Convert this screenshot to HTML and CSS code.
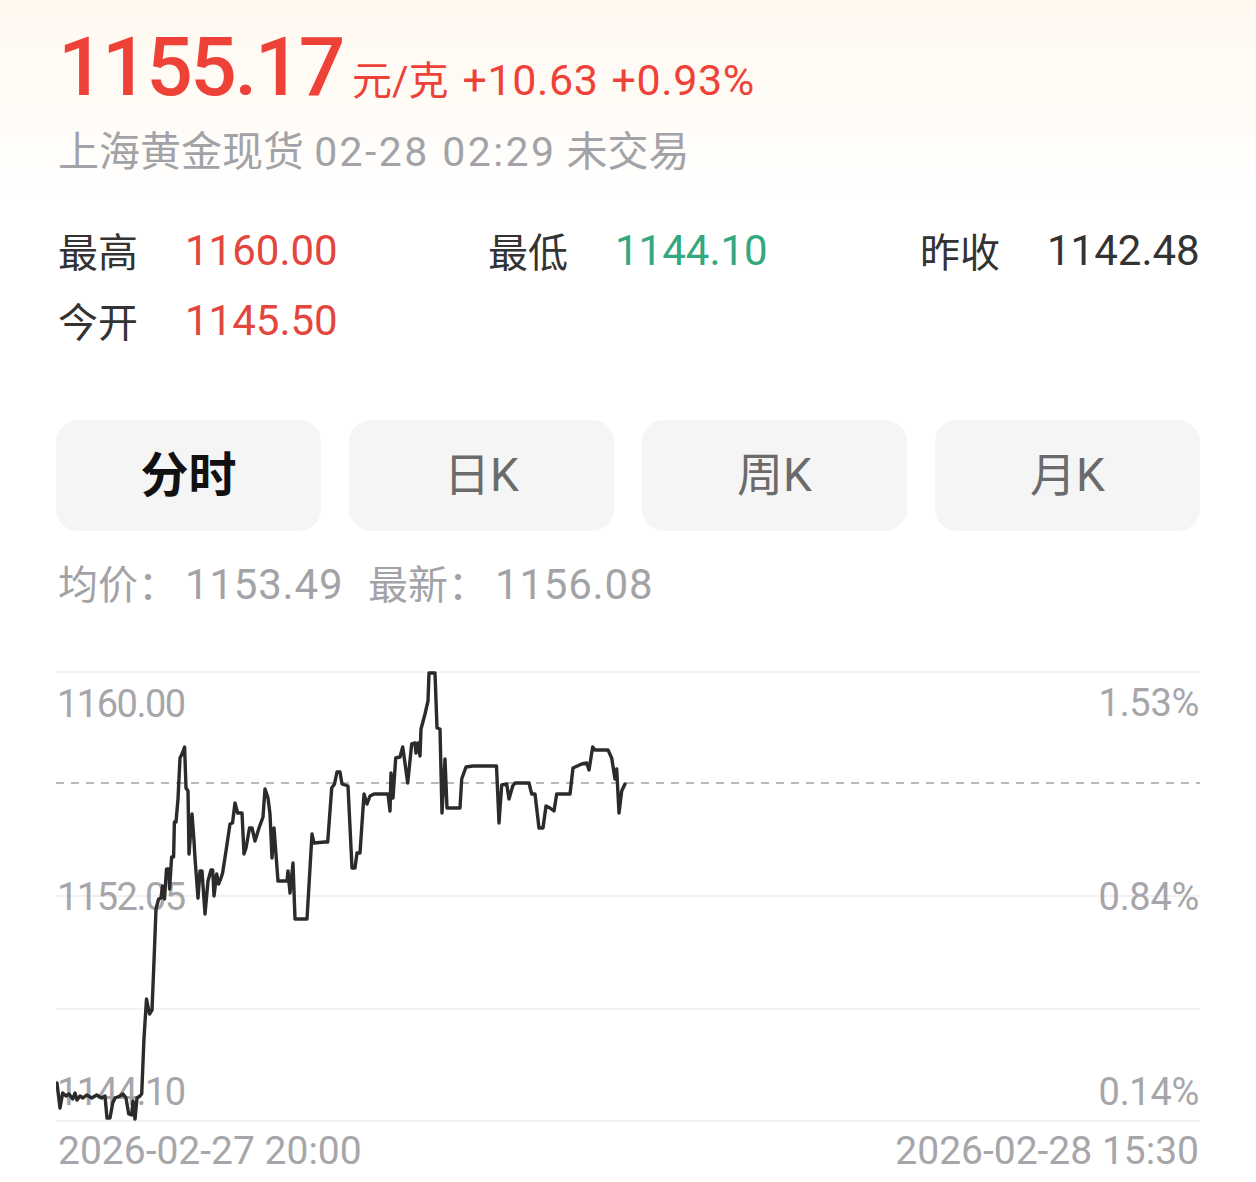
FILE: index.html
```html
<!DOCTYPE html>
<html lang="zh-CN">
<head>
<meta charset="utf-8">
<title>上海黄金现货</title>
<link rel="stylesheet" href="styles.css">
</head>
<body>
<div class="page">
  <header class="head">
    <div class="price-row">
      <span class="price">1155.17</span>
      <span class="unit">元/克</span>
      <span class="chg">+10.63</span>
      <span class="chg">+0.93%</span>
    </div>
    <div class="sub">上海黄金现货 <span class="sub-num">02-28 02:29</span> 未交易</div>
  </header>

  <section class="stats">
    <div class="stat"><span class="lbl">最高</span><span class="val up">1160.00</span></div>
    <div class="stat"><span class="lbl">最低</span><span class="val down">1144.10</span></div>
    <div class="stat"><span class="lbl">昨收</span><span class="val">1142.48</span></div>
    <div class="stat"><span class="lbl">今开</span><span class="val up">1145.50</span></div>
  </section>

  <nav class="tabs">
    <div class="tab active">分时</div>
    <div class="tab">日K</div>
    <div class="tab">周K</div>
    <div class="tab">月K</div>
  </nav>

  <div class="avg">
    <span class="avg-lbl">均价：</span><span class="avg-val">1153.49</span>
    <span class="avg-lbl">最新：</span><span class="avg-val">1156.08</span>
  </div>

  <div class="chart">
    <svg class="chart-svg" viewBox="56 660 1144 465" width="1144" height="465" xmlns="http://www.w3.org/2000/svg">
      <g class="grid">
        <line x1="56" y1="671" x2="1200" y2="671"/>
        <line x1="56" y1="895" x2="1200" y2="895"/>
        <line x1="56" y1="1008" x2="1200" y2="1008"/>
        <line x1="56" y1="1120" x2="1200" y2="1120"/>
      </g>
      <line class="base" x1="56" y1="782" x2="1200" y2="782"/>
      <g class="axis">
        <text x="57" y="716">1160.00</text>
        <text x="57" y="909">1152.05</text>
        <text x="57" y="1104">1144.10</text>
        <text class="r" x="1199" y="715">1.53%</text>
        <text class="r" x="1199" y="909">0.84%</text>
        <text class="r" x="1199" y="1104">0.14%</text>
      </g>
      <polyline class="trend" points="57,1082 60,1107 62.7,1092 66,1095 69,1093 72.7,1098 75,1092 77,1099 80,1095 83,1097 86.7,1094 91.7,1097 96.7,1094 101.7,1097 105,1095 107,1117 110,1117 112.7,1102 115,1097 120,1095 123,1093 126,1097 128.7,1113 131.7,1114 133,1100 135,1118 137,1097 140,1095 141.7,1093 144,1037 146.5,998 149.5,1013 152,1009 154,960 156,908 158.6,898 161,897 162.5,885 164.5,898 166.5,868 169,868 169.6,888 171.6,856 173.6,856 174.4,821 176,821 178,798 180,757 182,753 184.6,746 186,787 188,790 189,853 192,813 194,840 195,857 198,897 200,870 202,870 205,913 208,880 211,869 212.7,869 214,895 216.7,873 218.7,883 221,877 222.6,872 226,850 230,823 232.5,822 235,802 237.6,812 242,812 244,853 246,847 249.5,827 252,827 255,840 259,827 263,816 265,788 268,797 270,813 272,857 274,827 278,880 287,880 288,870 290,892 293,862 295,918 307,918 312,833 314,842 324.6,841 327.7,841 331.7,787 334.5,783 337,771 340,771 342,783 348,785 352,867 355,867 357,852 360,852 364,793 367,803 370,795 374,793 388,793 390,810 391,772 393,797 395.7,757 400,756 402.7,746 404,755 407.7,782 411.7,743 415,742 416,752 418,742 420,755 421,728 425,713 428,700 429,672 435,672 437,727 440,728 442,812 445,758 447,807 449,807 460,807 461.7,778 466,766 473,765 496.5,765 499,822 501.7,784 506.7,783 509,798 512.7,785 515,782 529,782 531.7,793 535,793 539,827 543,827 546,805 550,807 554,810 556.7,793 570,793 573,767 581.7,763 586.7,762 589,769 592.7,746 595,749 608,749 611.7,757 615,778 616.7,768 619,812 621.7,790 625,783"/>
    </svg>
    <div class="dates">
      <span>2026-02-27 20:00</span>
      <span>2026-02-28 15:30</span>
    </div>
  </div>
</div>
</body>
</html>
```

FILE: styles.css
```css
html, body {
  margin: 0;
  padding: 0;
  background: #ffffff;
}

body {
  font-family: Roboto, "Noto Sans CJK SC", sans-serif;
  color: #333333;
}

.page {
  width: 1256px;
  box-sizing: border-box;
}

.head {
  padding: 26px 56px 0 58px;
  height: 200px;
  box-sizing: border-box;
  background: linear-gradient(180deg, #fff9f0 0%, #fffbf5 45%, #fffefc 85%, #ffffff 100%);
}

.price-row {
  display: flex;
  align-items: baseline;
  line-height: 1;
  color: #ee4238;
}

.price {
  font-size: 82px;
  font-weight: 500;
  letter-spacing: -2.5px;
  margin-right: 9px;
}

.unit {
  font-size: 40px;
  margin-right: 14px;
}

.chg {
  font-size: 43px;
  letter-spacing: 0.6px;
  margin-right: 13px;
}

.sub {
  margin-top: 24px;
  font-size: 41px;
  line-height: 1;
  color: #a3a3a7;
}

.sub-num {
  letter-spacing: 2.4px;
}

.stats {
  display: grid;
  grid-template-columns: 430px 432px 1fr;
  padding: 15px 56px 0 58px;
}

.stat {
  display: flex;
  align-items: center;
  height: 70px;
}

.lbl {
  width: 127px;
  font-size: 40px;
  color: #333333;
}

.val {
  font-size: 42px;
  color: #333333;
}

.val.up { color: #e2463d; }
.val.down { color: #33a87e; }

.tabs {
  display: flex;
  gap: 28px;
  padding: 0 56px;
  margin-top: 65px;
}

.tab {
  flex: 1;
  height: 111px;
  box-sizing: border-box;
  padding-bottom: 9px;
  border-radius: 22px;
  background: #f5f5f5;
  display: flex;
  align-items: center;
  justify-content: center;
  font-size: 46px;
  color: #6b6b6b;
}

.tab.active {
  font-size: 48px;
  font-weight: 700;
  color: #111111;
}

.avg {
  margin-top: 34px;
  padding: 0 56px 0 58px;
  font-size: 40px;
  line-height: 40px;
  color: #a3a3a7;
  display: flex;
  align-items: baseline;
}

.avg-lbl {
  width: 127px;
  flex: none;
}

.avg-val {
  font-size: 42px;
  letter-spacing: 0.8px;
  width: 183px;
  flex: none;
}

.chart {
  margin-top: 55px;
  padding: 0 56px;
}

.chart-svg {
  display: block;
}

.grid line {
  stroke: #f1f1f2;
  stroke-width: 2;
}

.base {
  stroke: #b9b9b9;
  stroke-width: 2;
  stroke-dasharray: 8 7;
}

.axis text {
  font-family: Roboto, sans-serif;
  font-size: 38px;
  fill: #a6a6aa;
  letter-spacing: -1.5px;
}

.axis text.r {
  text-anchor: end;
  letter-spacing: -0.3px;
}

.trend {
  fill: none;
  stroke: #2b2b2b;
  stroke-width: 3.4;
  stroke-linejoin: round;
  stroke-linecap: round;
}

.dates {
  margin-top: 5px;
  display: flex;
  justify-content: space-between;
  padding: 0 1px 0 2px;
  font-size: 39px;
  line-height: 40px;
  color: #a6a6aa;
}
```
